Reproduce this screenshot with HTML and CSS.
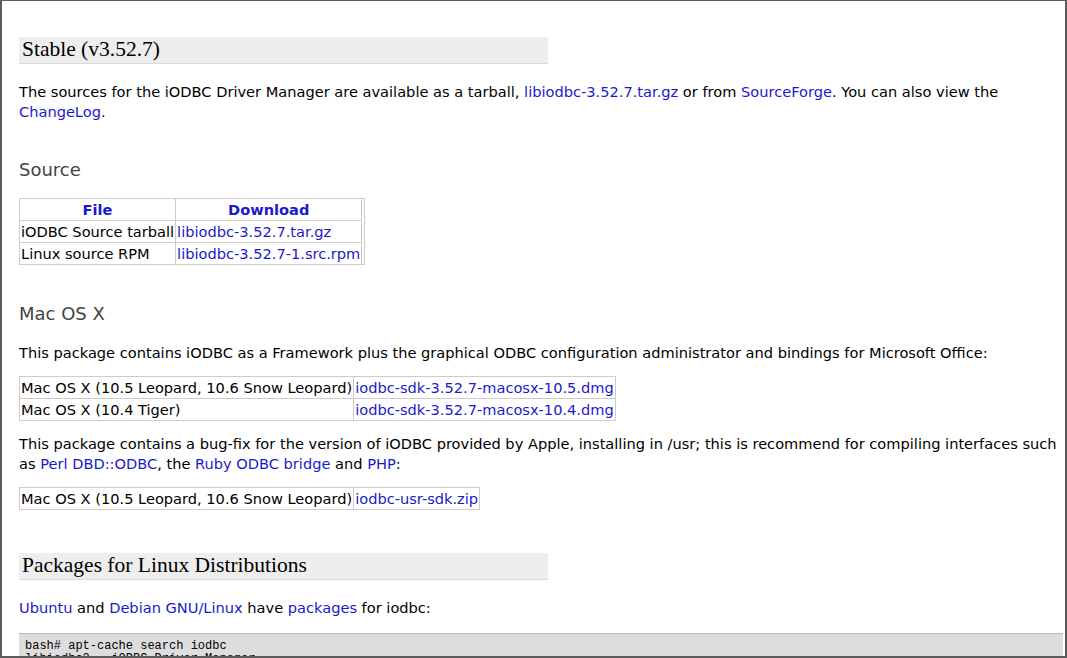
FILE: index.html
```html
<!DOCTYPE html>
<html>
<head>
<meta charset="utf-8">
<link rel="stylesheet" href="styles.css">
</head>
<body>
<div class="frame">
  <h2 class="sec sec-first">Stable (v3.52.7)</h2>
  <p class="txt p-intro">The sources for the iODBC Driver Manager are available as a tarball, <a href="#">libiodbc-3.52.7.tar.gz</a> or from <a href="#">SourceForge</a>. You can also view the <a href="#">ChangeLog</a>.</p>

  <h3 class="sub sub-source">Source</h3>
  <table class="dl dl-source">
    <tr><th><a href="#">File</a></th><th><a href="#">Download</a></th><td class="spacer" rowspan="3"></td></tr>
    <tr><td>iODBC Source tarball</td><td><a href="#">libiodbc-3.52.7.tar.gz</a></td></tr>
    <tr><td>Linux source RPM</td><td><a href="#">libiodbc-3.52.7-1.src.rpm</a></td></tr>
  </table>

  <h3 class="sub sub-mac">Mac OS X</h3>
  <p class="txt p-mac">This package contains iODBC as a Framework plus the graphical ODBC configuration administrator and bindings for Microsoft Office:</p>
  <table class="dl dl-mac">
    <tr><td>Mac OS X (10.5 Leopard, 10.6 Snow Leopard)</td><td><a href="#">iodbc-sdk-3.52.7-macosx-10.5.dmg</a></td></tr>
    <tr><td>Mac OS X (10.4 Tiger)</td><td><a href="#">iodbc-sdk-3.52.7-macosx-10.4.dmg</a></td></tr>
  </table>
  <p class="txt p-fix">This package contains a bug-fix for the version of iODBC provided by Apple, installing in /usr; this is recommend for compiling interfaces such as <a href="#">Perl DBD::ODBC</a>, the <a href="#">Ruby ODBC bridge</a> and <a href="#">PHP</a>:</p>
  <table class="dl dl-usr">
    <tr><td>Mac OS X (10.5 Leopard, 10.6 Snow Leopard)</td><td><a href="#">iodbc-usr-sdk.zip</a></td></tr>
  </table>

  <h2 class="sec sec-linux">Packages for Linux Distributions</h2>
  <p class="txt p-linux"><a href="#">Ubuntu</a> and <a href="#">Debian GNU/Linux</a> have <a href="#">packages</a> for iodbc:</p>
  <pre class="code">bash# apt-cache search iodbc
libiodbc2 - iODBC Driver Manager
libiodbc2-dev - iODBC Driver Manager (development files)</pre>
</div>
</body>
</html>
```
FILE: styles.css
```css
html, body {
  margin: 0;
  padding: 0;
  background: #fff;
}
.frame {
  box-sizing: border-box;
  width: 1067px;
  height: 658px;
  overflow: hidden;
  border-style: solid;
  border-color: #5c5c5c;
  border-width: 1px 2px 2px 2px;
  padding: 36px 2px 0 17px;
  font-family: "DejaVu Sans", Verdana, sans-serif;
  font-size: 14.6px;
  color: #000;
}
a {
  color: #1a1acc;
  text-decoration: none;
}
.sec {
  width: 526px;
  margin: 0;
  padding: 0 0 0 3px;
  height: 26px;
  line-height: 25px;
  background: #eeeeee;
  border-bottom: 1px solid #dadada;
  font-family: "Liberation Serif", "Times New Roman", serif;
  font-size: 21.5px;
  font-weight: normal;
  color: #000;
}
.txt {
  margin: 0;
  line-height: 20px;
}
.p-intro { margin-top: 18px; }
.sub {
  margin: 0;
  font-size: 18px;
  line-height: 22px;
  font-weight: normal;
  color: #444;
}
.sub-source { margin-top: 37px; }
.dl {
  border-collapse: collapse;
  border: 1px solid #cccccc;
}
.dl td, .dl th {
  border: 1px solid #cccccc;
  padding: 0 1px;
  height: 21px;
  line-height: 21px;
  white-space: nowrap;
}
.dl th {
  font-weight: bold;
  text-align: center;
}
.dl td.spacer {
  padding: 0 1px;
  width: 0;
}
.dl-source { margin-top: 17px; }
.sub-mac { margin-top: 38px; }
.p-mac { margin-top: 18px; }
.dl-mac { margin-top: 13px; }
.p-fix { margin-top: 13px; }
.dl-usr { margin-top: 13px; }
.sec-linux { margin-top: 43px; }
.p-linux { margin-top: 18px; }
.code {
  margin: 15px 0 0 0;
  padding: 6px 6px;
  background: #dddddd;
  border-top: 1px solid #bbbbbb;
  font-family: "Liberation Mono", "Courier New", monospace;
  font-size: 12px;
  line-height: 13px;
  color: #000;
}
```
